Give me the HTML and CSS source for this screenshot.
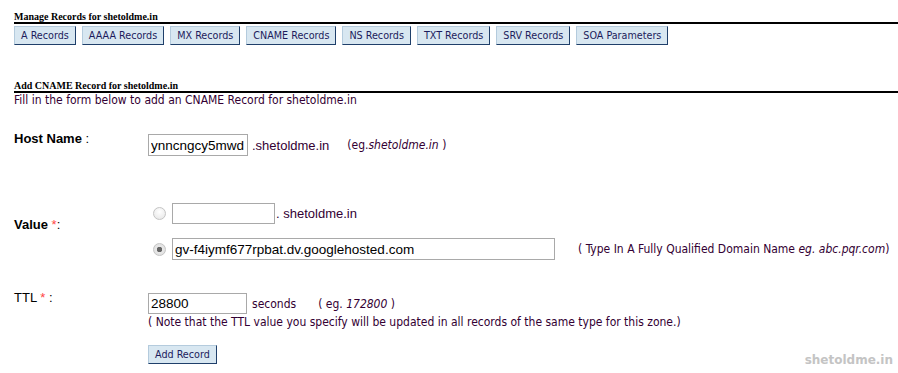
FILE: index.html
```html
<!DOCTYPE html>
<html lang="en">
<head>
    <meta charset="UTF-8" />
    <title>Manage Records</title>
    <link rel="stylesheet" href="styles.css">
</head>
<body>
<div class="page">
    <h3 class="section-title">Manage Records for shetoldme.in</h3>
    <div class="record-tabs">
        <button class="btn">A Records</button>
        <button class="btn">AAAA Records</button>
        <button class="btn">MX Records</button>
        <button class="btn">CNAME Records</button>
        <button class="btn">NS Records</button>
        <button class="btn">TXT Records</button>
        <button class="btn">SRV Records</button>
        <button class="btn">SOA Parameters</button>
    </div>

    <h3 class="section-title second">Add CNAME Record for shetoldme.in</h3>
    <p class="intro">Fill in the form below to add an CNAME Record for shetoldme.in</p>

    <div class="form-row host-row">
        <div class="label"><b>Host Name</b> :</div>
        <div class="field inline">
            <input type="text" class="input input-host" value="ynncngcy5mwd">
            <span class="suffix">.shetoldme.in</span>
            <span class="hint host-eg">(eg.<i>shetoldme.in</i> )</span>
        </div>
    </div>

    <div class="form-row value-row">
        <div class="label value-label"><b>Value</b> <span class="req">*</span>:</div>
        <div class="field value-field">
            <div class="inline">
                <input type="radio" name="vtype" class="radio">
                <input type="text" class="input input-short">
                <span class="suffix tight">. shetoldme.in</span>
            </div>
            <div class="inline">
                <input type="radio" name="vtype" class="radio" checked>
                <input type="text" class="input input-long" value="gv-f4iymf677rpbat.dv.googlehosted.com">
                <span class="hint fqdn">( Type In A Fully Qualified Domain Name <i>eg. abc.pqr.com</i>)</span>
            </div>
        </div>
    </div>

    <div class="form-row ttl-row">
        <div class="label">TTL <span class="req">*</span> :</div>
        <div class="field">
            <div class="inline">
                <input type="text" class="input input-ttl" value="28800">
                <span class="hint seconds">seconds</span>
                <span class="hint ttl-eg">( eg. <i>172800</i> )</span>
            </div>
            <div class="hint note">( Note that the TTL value you specify will be updated in all records of the same type for this zone.)</div>
            <div>
                <button class="btn add-btn">Add Record</button>
            </div>
        </div>
    </div>
</div>
<div class="watermark">shetoldme.in</div>
</body>
</html>
```

FILE: styles.css
```css
* {
    box-sizing: border-box;
}

body {
    margin: 0;
    background-color: white;
    color: #330033;
    font-family: "DejaVu Sans Condensed", "DejaVu Sans", sans-serif;
    font-size: 12px;
}

.page {
    padding: 11px 0 0 14px;
}

.section-title {
    margin: 0;
    font-family: "Liberation Serif", serif;
    font-size: 10px;
    font-weight: bold;
    color: #000;
    line-height: 11px;
    border-bottom: 2px solid #000;
}

.section-title.second {
    margin-top: 35px;
}

.record-tabs {
    display: flex;
    gap: 6px;
    margin-top: 2px;
}

.btn {
    height: 19px;
    margin: 0;
    padding: 0 6px;
    background-color: #d8e7f1;
    border: 1px solid #1f3f6a;
    border-top-color: #b4cbdd;
    border-left-color: #b4cbdd;
    border-radius: 0;
    color: #1c1c5c;
    font-family: "DejaVu Sans Condensed", "DejaVu Sans", sans-serif;
    font-size: 10.7px;
    line-height: 16px;
    cursor: pointer;
}

.intro {
    margin: 0;
    font-size: 12px;
    line-height: 14px;
}

.form-row {
    display: flex;
    align-items: flex-start;
}

.label {
    width: 134px;
    flex-shrink: 0;
    font-family: "Liberation Sans", Arial, sans-serif;
    font-size: 13px;
    line-height: 15px;
    color: #000;
}

.req {
    color: #ff4444;
}

.field {
    display: flex;
    flex-direction: column;
}

.inline {
    display: flex;
    flex-direction: row;
    align-items: center;
}

.host-row {
    margin-top: 24px;
}

.host-row .field,
.ttl-row .field {
    padding-top: 3px;
}

.value-row {
    margin-top: 47px;
}

.value-label {
    margin-top: 14px;
}

.value-field {
    gap: 14px;
}

.ttl-row {
    margin-top: 30px;
}

.input {
    height: 22px;
    margin: 0;
    border: 1px solid #a9a9a9;
    padding: 0 2px;
    font-family: "Liberation Sans", Arial, sans-serif;
    font-size: 13.5px;
    color: #000;
}

.input-host { width: 100px; }
.input-short { width: 103px; height: 21px; }
.input-long { width: 383px; }
.input-ttl { width: 99px; height: 21px; }

.suffix {
    margin-left: 4px;
    font-family: "Liberation Sans", Arial, sans-serif;
    font-size: 13px;
}

.suffix.tight {
    margin-left: 1px;
}

.hint {
    font-size: 12px;
}

.host-eg {
    margin-left: 18px;
}

.radio {
    appearance: none;
    width: 13px;
    height: 13px;
    margin: 0 6px 0 5px;
    border: 1px solid #c4c4c4;
    border-radius: 50%;
    background: radial-gradient(circle at 50% 35%, #ffffff 0%, #e4e4e4 100%);
}

.radio:checked {
    background: radial-gradient(circle, #666 0, #666 2.5px, #e8e8e8 3px, #dcdcdc 100%);
}

.fqdn {
    margin-left: 23px;
}

.seconds {
    margin-left: 5px;
}

.ttl-eg {
    margin-left: 22px;
}

.note {
    margin-top: 1px;
    line-height: 14px;
}

.add-btn {
    margin-top: 16px;
}

.watermark {
    position: absolute;
    right: 5px;
    bottom: 6px;
    font-family: "DejaVu Sans", sans-serif;
    font-weight: bold;
    font-size: 12px;
    color: #c4c4c4;
}
```
